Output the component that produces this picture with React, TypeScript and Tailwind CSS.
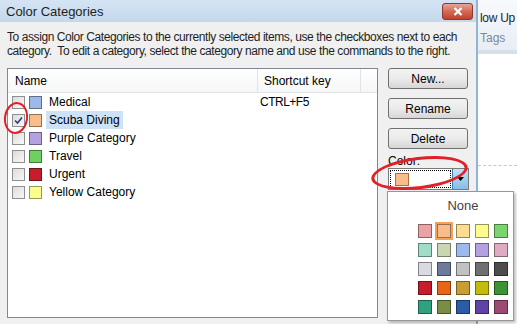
import * as React from 'react';

const categories = [
  { name: 'Medical', color: '#9cb9e9', key: 'CTRL+F5' },
  { name: 'Scuba Diving', color: '#f9bc8b', key: '', checked: true, selected: true },
  { name: 'Purple Category', color: '#b4a1e2', key: '' },
  { name: 'Travel', color: '#6fd062', key: '' },
  { name: 'Urgent', color: '#c61d2a', key: '' },
  { name: 'Yellow Category', color: '#fcfb8e', key: '' },
];

const palette = [
  ['#e9a3a3', '#f9bc8b', '#fcdc8f', '#fcfb8e', '#7bd46d'],
  ['#a0ddc9', '#cad6b2', '#9cb9e9', '#b4a1e2', '#ddabc2'],
  ['#dadae2', '#6d7a9b', '#c1c1c1', '#707070', '#4d4d4d'],
  ['#c61d2a', '#e86517', '#c99d36', '#c4bc0b', '#3b9333'],
  ['#31a080', '#798d45', '#2c5ba8', '#6044a5', '#9d4a72'],
];

function Checkbox({ checked }: { checked?: boolean }) {
  return (
    <div className="flex h-[13px] w-[13px] items-center justify-center border border-[#8f8f8f] bg-gradient-to-br from-[#dcdcdc] to-[#f8f8f8]">
      {checked && (
        <svg width="9" height="9" viewBox="0 0 9 9">
          <path d="M1 4.5 L3.5 7 L8 1.5" fill="none" stroke="#2d3e7a" strokeWidth="1.6" />
        </svg>
      )}
    </div>
  );
}

function Button({ label }: { label: string }) {
  return (
    <div className="flex h-[21px] w-[80px] items-center justify-center rounded-[3px] border border-[#707070] bg-gradient-to-b from-[#f2f2f2] via-[#ebebeb] to-[#d6d6d6] text-[12px] text-black">
      {label}
    </div>
  );
}

export default function App() {
  return (
    <div
      className="relative flex h-[324px] w-[517px] overflow-hidden bg-white text-[12px] text-black"
      style={{ fontFamily: '"Liberation Sans", Arial, sans-serif' }}
    >
      {/* dialog */}
      <div className="flex w-[478px] shrink-0 flex-col border-r-2 border-[#8fb4da]">
        <div className="flex h-[22px] items-center justify-between bg-gradient-to-b from-[#d5e4f3] to-[#c3d8ee] pl-[6px] pr-[3px]">
          <span className="text-[13px] leading-none text-[#1e1e1e]">Color Categories</span>
          <div className="flex h-[17px] w-[31px] items-center justify-center rounded-[3px] border border-[#8b3a2c] bg-gradient-to-b from-[#e8a496] via-[#d26a54] to-[#c2402a]">
            <svg width="10" height="9" viewBox="0 0 10 9">
              <path d="M1.5 1 L8.5 8 M8.5 1 L1.5 8" stroke="white" strokeWidth="2.2" />
            </svg>
          </div>
        </div>
        <div className="flex flex-1 flex-col bg-[#f0f0f0] pl-[7px]">
          <p className="mt-[8px] whitespace-nowrap text-[12px] leading-[14px] tracking-[-0.42px] text-[#1e1e1e]">
            To assign Color Categories to the currently selected items, use the checkboxes next to each
            <br />
            category.&nbsp; To edit a category, select the category name and use the commands to the right.
          </p>
          <div className="mt-[10px] flex gap-[10px]">
            {/* list box */}
            <div className="flex h-[250px] w-[371px] flex-col border border-[#828790] bg-white">
              <div className="flex h-[24px] items-center border-b border-[#e3e3e3] bg-gradient-to-b from-white to-[#f5f6f7] text-[12px]">
                <div className="flex h-full w-[250px] items-center border-r border-[#e1e3e6] pl-[7px]">Name</div>
                <div className="flex h-full w-[103px] items-center border-r border-[#e1e3e6] pl-[6px]">Shortcut key</div>
              </div>
              {categories.map((c) => (
                <div key={c.name} className="flex h-[18px] items-center">
                  <div className="flex w-[250px] items-center pl-[4px]">
                    <Checkbox checked={c.checked} />
                    <div className="ml-[4px] h-[13px] w-[13px] border border-black/40" style={{ backgroundColor: c.color }} />
                    <span className={`ml-[4px] px-[3px] leading-[18px] ${c.selected ? 'bg-[#cde1f7]' : ''}`}>{c.name}</span>
                  </div>
                  <span className="pl-[2px] tracking-[-0.5px]">{c.key}</span>
                </div>
              ))}
            </div>
            {/* buttons */}
            <div className="flex flex-col">
              <div className="flex flex-col gap-[9px]">
                <Button label="New..." />
                <Button label="Rename" />
                <Button label="Delete" />
              </div>
              <span className="mt-[5px] text-[12px] leading-[14px]">Color:</span>
              <div className="flex h-[22px] w-[81px] border border-[#7a7a7a] bg-white">
                <div className="m-[1px] flex flex-1 items-center border border-dotted border-black pl-[4px]">
                  <div className="h-[13px] w-[14px] border border-[#b0703c] bg-[#f9bc8b]" />
                </div>
                <div className="flex w-[16px] items-center justify-center border-l border-[#3c7fb1] bg-gradient-to-b from-[#c4e2f8] to-[#86bce6]">
                  <svg width="7" height="4" viewBox="0 0 7 4">
                    <path d="M0 0 H7 L3.5 4 Z" fill="black" />
                  </svg>
                </div>
              </div>
            </div>
          </div>
        </div>
      </div>

      {/* background application */}
      <div className="flex min-w-0 flex-1 flex-col">
        <div className="flex h-[50px] flex-col bg-gradient-to-b from-[#f7f9fc] to-[#e8eef6] pl-[2px]">
          <span className="mt-[10px] whitespace-nowrap text-[12px] leading-[16px] tracking-[-0.3px] text-[#1e1e1e]">low Up</span>
          <span className="mt-[4px] text-[12px] leading-[16px] text-[#7d8896]">Tags</span>
        </div>
        <div className="h-[4px] bg-[#d9dfe7]" />
        <div className="mt-[111px] border-t border-dashed border-[#c8c8c8]" />
      </div>

      {/* color popup */}
      <div className="absolute left-[387px] top-[191px] flex h-[130px] w-[127px] flex-col border border-[#979797] bg-white shadow-[2px_2px_3px_rgba(0,0,0,0.25)]">
        <div className="ml-[30px] w-[90px]">
          <div className="mt-[6px] text-center text-[13px] leading-[16px] text-[#444]">None</div>
          <div className="mt-[10px] grid grid-cols-[repeat(5,14px)] gap-[5px]">
            {palette.flat().map((col, i) => (
              <div
                key={i}
                className={`h-[14px] w-[14px] border border-black/40 ${i === 1 ? 'outline outline-2 outline-[#f4a25a]' : ''}`}
                style={{ backgroundColor: col }}
              />
            ))}
          </div>
        </div>
      </div>

      {/* annotations */}
      <div className="pointer-events-none absolute left-[4px] top-[102px] h-[32px] w-[24px] rotate-[8deg] rounded-[50%] border-[2px] border-[#e0202a]" />
      <div className="pointer-events-none absolute left-[371px] top-[157px] h-[32px] w-[97px] -rotate-[7deg] rounded-[50%] border-[3px] border-[#e0202a]" />
    </div>
  );
}
